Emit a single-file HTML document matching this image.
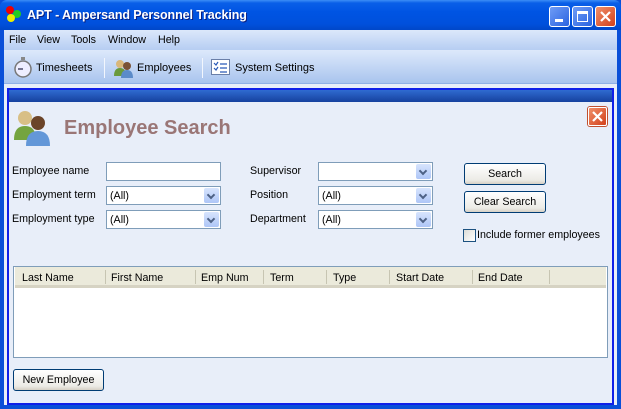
<!DOCTYPE html>
<html><head><meta charset="utf-8"><style>
*{margin:0;padding:0;box-sizing:border-box}
body{width:621px;height:409px;overflow:hidden;font-family:"Liberation Sans",sans-serif;font-size:10.7px;color:#000;background:#0a4fd8;position:relative}
.abs{position:absolute}
#title{left:0;top:0;width:621px;height:30px;background:linear-gradient(#3d8ef7 0,#0a5fe8 3px,#0054e3 12px,#0050dc 24px,#0047c8 30px);border-radius:7px 7px 0 0}
#title .t{left:27px;top:8px;color:#fff;font-weight:bold;font-size:12.5px;text-shadow:1px 1px #0a1f80;letter-spacing:-0.1px}
.tb{top:6px;width:21px;height:21px;border:1px solid #fff;border-radius:3px;background:linear-gradient(135deg,#6f9cf6,#2a63e0)}
#client{left:4px;top:30px;width:613px;height:375px;background:#e8eef9}
#menu{left:4px;top:30px;width:613px;height:20px;background:linear-gradient(#dce8fb,#b6cdf2)}
#menu span{position:absolute;top:4px}
#tool{left:4px;top:50px;width:613px;height:34px;background:linear-gradient(#dde9fb,#a9c4ee);border-bottom:1px solid #8fb0e6}
#tool span{position:absolute;top:12px;font-size:11px}
.sep{position:absolute;top:8px;width:1px;height:20px;background:#93a9cf;border-right:1px solid #f2f6fd}
#inner{left:7px;top:88px;width:607px;height:317px;border:2px solid #1020e8;background:#e8eef9}
#bar{left:0;top:0;width:603px;height:12px;background:linear-gradient(#2f6bd0,#16419f)}
.lbl{position:absolute}
.inp{position:absolute;height:19px;background:#fff;border:1px solid #7f9db9}
.inp i{position:absolute;right:1px;top:1px;width:15px;height:15px;border-radius:2px;background:linear-gradient(#d7e4fd,#aec6f7);font-style:normal}
.inp i:after{content:"";position:absolute;left:4px;top:4px;width:4px;height:4px;border-right:2px solid #4d6185;border-bottom:2px solid #4d6185;transform:rotate(45deg)}
.inp b{position:absolute;left:3px;top:3px;font-weight:normal}
.btn{position:absolute;height:22px;border:1px solid #003c74;border-radius:3px;background:linear-gradient(#fff,#ecebe6 80%,#d6d0c5);text-align:center;line-height:20px}
#grid{left:13px;top:266px;width:595px;height:92px;border:1px solid #7f9db9;background:#fff}
#hdr{left:1px;top:0;width:591px;height:21px;background:#ebeadb;border-bottom:3px solid #d6d3c3}
#hdr span{position:absolute;top:5px}
#hdr em{position:absolute;top:3px;width:1px;height:14px;background:#c7c5b2}
</style></head><body>
<div class="abs" id="title">
 <div class="abs" style="left:6px;top:6px;width:8px;height:8px;border-radius:50%;background:#e00"></div>
 <div class="abs" style="left:13px;top:10px;width:8px;height:8px;border-radius:50%;background:#2c2"></div>
 <div class="abs" style="left:7px;top:14px;width:8px;height:8px;border-radius:50%;background:#ee0"></div>
 <div class="abs t">APT - Ampersand Personnel Tracking</div>
 <div class="abs tb" style="left:549px"><div class="abs" style="left:5px;top:12px;width:8px;height:3px;background:#fff"></div></div>
 <div class="abs tb" style="left:572px"><div class="abs" style="left:4px;top:4px;width:11px;height:11px;border:1px solid #fff;border-top-width:3px"></div></div>
 <div class="abs tb" style="left:595px;background:linear-gradient(135deg,#f0906a,#d2401b)"><svg width="19" height="19" style="position:absolute;left:0;top:0"><path d="M5 5L14 14M14 5L5 14" stroke="#fff" stroke-width="2.2"/></svg></div>
</div>
<div class="abs" id="client"></div>
<div class="abs" id="menu"><span style="left:5px">File</span><span style="left:33px">View</span><span style="left:67px">Tools</span><span style="left:104px">Window</span><span style="left:154px">Help</span></div>
<div class="abs" id="tool">
 <svg class="abs" style="left:9px;top:7px" width="20" height="22"><rect x="8" y="0" width="4" height="3" fill="#888"/><circle cx="10" cy="12" r="8" fill="#eef" stroke="#777" stroke-width="1.5"/><path d="M10 12L5 12" stroke="#335" stroke-width="1.3"/></svg>
 <span style="left:32px">Timesheets</span>
 <div class="sep" style="left:100px"></div>
 <svg class="abs" style="left:109px;top:8px" width="22" height="20"><circle cx="7" cy="6" r="4" fill="#d9b77a"/><path d="M1 18Q1 10 7 10Q13 10 13 18Z" fill="#6a9a3c"/><circle cx="14" cy="8" r="4" fill="#7a5236"/><path d="M8 20Q8 12 14 12Q20 12 20 20Z" fill="#5b8bc9"/></svg>
 <span style="left:133px">Employees</span>
 <div class="sep" style="left:198px"></div>
 <svg class="abs" style="left:207px;top:9px" width="20" height="17"><rect x="0.5" y="0.5" width="18" height="15" fill="#fff" stroke="#6a7fa8"/><path d="M3 4l2 2 2-3M3 9l2 2 2-3M9 5h7M9 9h7M9 13h7" stroke="#2a5ab8" stroke-width="1.2" fill="none"/></svg>
 <span style="left:231px">System Settings</span>
</div>
<div class="abs" id="inner">
 <div class="abs" id="bar"></div>
 <svg class="abs" style="left:4px;top:18px" width="40" height="40"><circle cx="12" cy="10" r="7" fill="#d8bf86"/><path d="M1 32Q1 18 12 18Q23 18 23 32Z" fill="#74a43f"/><circle cx="25" cy="15" r="7" fill="#6b4429"/><path d="M13 38Q13 23 25 23Q37 23 37 38Z" fill="#6397d8"/></svg>
 <div class="abs" style="left:55px;top:27px;font-size:20px;font-weight:bold;color:#9a7676">Employee Search</div>
 <div class="abs" style="left:579px;top:17px;width:19px;height:19px;border:1px solid #fff;border-radius:2px;background:linear-gradient(135deg,#f0906a,#d2401b);box-shadow:0 0 0 1px #c05030"><svg width="17" height="17"><path d="M4 4L13 13M13 4L4 13" stroke="#fff" stroke-width="2.2"/></svg></div>
</div>
<div class="lbl" style="left:12px;top:165px">Employee name</div>
<div class="lbl" style="left:12px;top:189px">Employment term</div>
<div class="lbl" style="left:12px;top:213px">Employment type</div>
<div class="inp" style="left:106px;top:162px;width:115px"></div>
<div class="inp" style="left:106px;top:186px;width:115px"><b>(All)</b><i></i></div>
<div class="inp" style="left:106px;top:210px;width:115px"><b>(All)</b><i></i></div>
<div class="lbl" style="left:250px;top:165px">Supervisor</div>
<div class="lbl" style="left:250px;top:189px">Position</div>
<div class="lbl" style="left:250px;top:213px">Department</div>
<div class="inp" style="left:318px;top:162px;width:115px"><i></i></div>
<div class="inp" style="left:318px;top:186px;width:115px"><b>(All)</b><i></i></div>
<div class="inp" style="left:318px;top:210px;width:115px"><b>(All)</b><i></i></div>
<div class="btn" style="left:464px;top:163px;width:82px">Search</div>
<div class="btn" style="left:464px;top:191px;width:82px">Clear Search</div>
<div class="abs" style="left:463px;top:229px;width:13px;height:13px;border:1px solid #1c5180;background:linear-gradient(135deg,#dcdcd7,#fff)"></div>
<div class="lbl" style="left:477px;top:229px">Include former employees</div>
<div class="abs" id="grid"><div class="abs" id="hdr">
 <span style="left:7px">Last Name</span><em style="left:90px"></em>
 <span style="left:96px">First Name</span><em style="left:180px"></em>
 <span style="left:186px">Emp Num</span><em style="left:248px"></em>
 <span style="left:255px">Term</span><em style="left:311px"></em>
 <span style="left:318px">Type</span><em style="left:374px"></em>
 <span style="left:381px">Start Date</span><em style="left:457px"></em>
 <span style="left:463px">End Date</span><em style="left:534px"></em>
</div></div>
<div class="btn" style="left:13px;top:369px;width:91px">New Employee</div>
</body></html>
